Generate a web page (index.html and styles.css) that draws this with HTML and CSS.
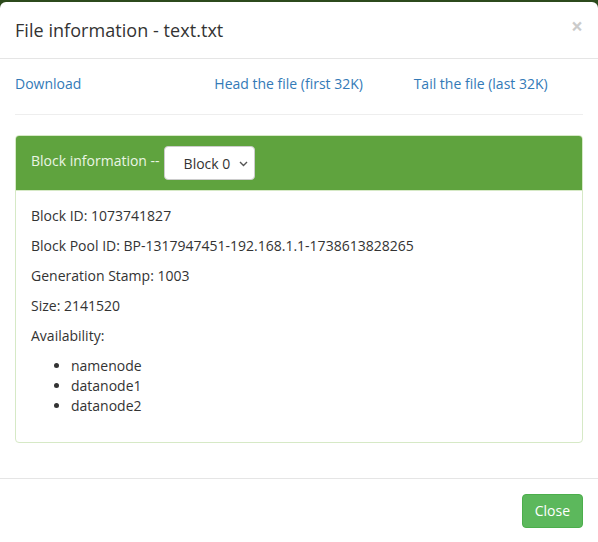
FILE: index.html
```html
<!DOCTYPE html>
<html>
<head>
<meta charset="utf-8">
<link rel="stylesheet" href="styles.css">
</head>
<body>
<div class="modal">
  <div class="modal-header">
    <h4 class="modal-title">File information - text.txt</h4>
    <span class="close">&times;</span>
  </div>
  <div class="modal-body">
    <div class="links">
      <a href="#">Download</a>
      <a href="#">Head the file (first 32K)</a>
      <a href="#">Tail the file (last 32K)</a>
    </div>
    <hr class="sep">
    <div class="panel">
      <div class="panel-heading">
        <span class="heading-label">Block information --</span>
        <div class="block-select">
          <span>Block 0</span>
          <svg width="9" height="6" viewBox="0 0 9 6"><path d="M1 1 L4.5 4.5 L8 1" fill="none" stroke="#555" stroke-width="1.4"/></svg>
        </div>
      </div>
      <div class="panel-body">
        <p>Block ID: 1073741827</p>
        <p>Block Pool ID: BP-1317947451-192.168.1.1-1738613828265</p>
        <p>Generation Stamp: 1003</p>
        <p>Size: 2141520</p>
        <p>Availability:</p>
        <ul>
          <li>namenode</li>
          <li>datanode1</li>
          <li>datanode2</li>
        </ul>
      </div>
    </div>
  </div>
  <div class="modal-footer">
    <button class="btn-close">Close</button>
  </div>
</div>
</body>
</html>
```
FILE: styles.css
```css
* { box-sizing: border-box; }
html, body { margin: 0; padding: 0; }
body {
  background: #2c4a1c;
  font-family: "Open Sans", "Noto Sans", sans-serif;
  font-size: 14px;
  line-height: 20px;
  color: #333;
  width: 598px;
  height: 542px;
  overflow: hidden;
  padding-top: 2px;
}
.modal {
  background: #fff;
  border-radius: 6px 6px 0 0;
  width: 598px;
}
.modal-header {
  display: flex;
  justify-content: space-between;
  align-items: flex-start;
  padding: 15px;
  border-bottom: 1px solid #e5e5e5;
}
.modal-title {
  margin: 0;
  font-size: 18px;
  font-weight: 500;
  line-height: 26px;
  letter-spacing: 0.05px;
}
.close {
  font-size: 21px;
  font-weight: bold;
  line-height: 1;
  color: #000;
  opacity: 0.2;
  margin-top: -1px;
  margin-right: 0;
}
.modal-body { padding: 15px; }
.links {
  display: grid;
  grid-template-columns: repeat(3, 1fr);
  margin: 0 -15px;
}
.links a {
  padding: 0 15px;
  color: #337ab7;
  text-decoration: none;
}
.sep {
  margin: 20px 0;
  border: 0;
  border-top: 1px solid #eee;
}
.panel {
  border: 1px solid #d6e9c6;
  border-radius: 4px;
  margin-bottom: 20px;
}
.panel-heading {
  display: flex;
  align-items: center;
  background: #5fa33e;
  color: #eaf5e4;
  padding: 10px 15px;
  border-radius: 3px 3px 0 0;
  border-bottom: 1px solid #d6e9c6;
}
.heading-label { padding-bottom: 5px; }
.block-select {
  margin-left: 4px;
  height: 34px;
  width: 91px;
  display: flex;
  align-items: center;
  justify-content: space-between;
  padding: 1px 6px 0 19px;
  color: #333;
  background: #fff;
  border: 1px solid #ccc;
  border-radius: 4px;
}
.block-select svg { margin-top: 1px; }
.panel-body { padding: 15px 15px 16px; }
.panel-body p { margin: 0 0 10px; }
.panel-body ul { margin: 0 0 10px; padding-left: 40px; }
.modal-footer {
  display: flex;
  justify-content: flex-end;
  padding: 15px;
  border-top: 1px solid #e5e5e5;
}
.btn-close {
  font-family: inherit;
  font-size: 14px;
  line-height: 20px;
  padding: 6px 12px;
  color: #fff;
  background: #5cb85c;
  border: 1px solid #4cae4c;
  border-radius: 4px;
}
```
